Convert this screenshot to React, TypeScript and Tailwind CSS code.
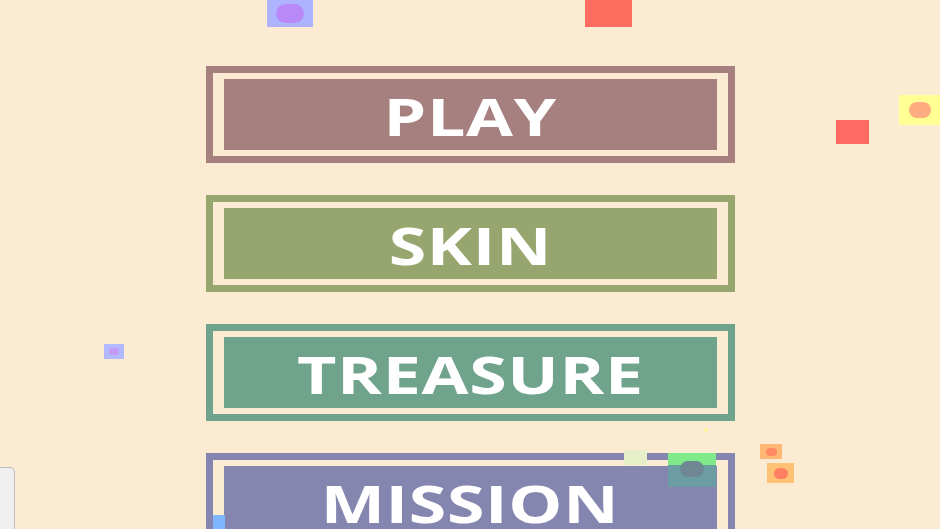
import React from 'react';

const buttons = [
    { label: 'PLAY', color: 'border-[#a67f7f]', fill: 'bg-[#a67f7f]' },
    { label: 'SKIN', color: 'border-[#97a56e]', fill: 'bg-[#97a56e]' },
    { label: 'TREASURE', color: 'border-[#6fa38c]', fill: 'bg-[#6fa38c]' },
    { label: 'MISSION', color: 'border-[#8586b0]', fill: 'bg-[#8586b0]' },
];

function MenuButton({ label, color, fill }: { label: string; color: string; fill: string }) {
    return (
        <div className={`h-[97px] w-[529px] shrink-0 border-[7px] ${color} px-[11px] py-[6px]`}>
            <div className={`flex h-full items-center justify-center ${fill}`}>
                <span className="inline-block translate-y-[1px] scale-x-[1.31] font-['Open_Sans',sans-serif] text-[52px] font-bold leading-none tracking-[0.5px] text-white">
                    {label}
                </span>
            </div>
        </div>
    );
}

export default function App() {
    return (
        <div className="relative h-[529px] w-full overflow-hidden bg-[#fbebd3]">

            {/* menu */}
            <div className="flex flex-col items-center gap-[32px] pt-[66px]">
                {buttons.map((b) => (
                    <MenuButton key={b.label} {...b} />
                ))}
            </div>

            {/* floating particles */}
            <div className="absolute left-[267px] top-0 flex h-[27px] w-[46px] items-center justify-center bg-[#adb3ff]">
                <div className="h-[19px] w-[28px] rounded-full bg-[#b98af7]" />
            </div>
            <div className="absolute left-[585px] top-0 h-[27px] w-[47px] bg-[#ff6c60]" />
            <div className="absolute left-[836px] top-[120px] h-[24px] w-[33px] bg-[#ff6a62]" />
            <div className="absolute left-[899px] top-[95px] flex h-[30px] w-[41px] items-center justify-center bg-[#ffff92]">
                <div className="h-[16px] w-[22px] rounded-full bg-[#ffab82]" />
            </div>
            <div className="absolute left-[104px] top-[344px] flex h-[15px] w-[20px] items-center justify-center bg-[#b3b9ff]">
                <div className="h-[7px] w-[10px] rounded-full bg-[#c39af5]" />
            </div>
            <div className="absolute left-[704px] top-[428px] h-[4px] w-[4px] rounded-full bg-[#fff59a]" />
            <div className="absolute left-[624px] top-[450px] h-[15px] w-[23px] bg-[#e6efc8]" />
            <div className="absolute left-[668px] top-[453px] h-[34px] w-[48px] bg-[#6c9da3]">
                <div className="h-[12px] w-full bg-[#80e98a]" />
                <div className="absolute left-[12px] top-[8px] h-[16px] w-[24px] rounded-full bg-[#6e8793]" />
            </div>
            <div className="absolute left-[760px] top-[444px] flex h-[15px] w-[22px] items-center justify-center bg-[#ffb774]">
                <div className="h-[8px] w-[11px] rounded-full bg-[#ff8a64]" />
            </div>
            <div className="absolute left-[767px] top-[463px] flex h-[20px] w-[27px] items-center justify-center bg-[#ffc173]">
                <div className="h-[11px] w-[14px] rounded-full bg-[#ff7f63]" />
            </div>
            <div className="absolute left-[213px] top-[515px] h-[14px] w-[12px] bg-[#7fb6ff]" />
            <div className="absolute -left-[6px] top-[467px] h-[70px] w-[21px] rounded-[5px] border border-[#bdbdbd] bg-[#efefef]" />
        </div>
    );
}
